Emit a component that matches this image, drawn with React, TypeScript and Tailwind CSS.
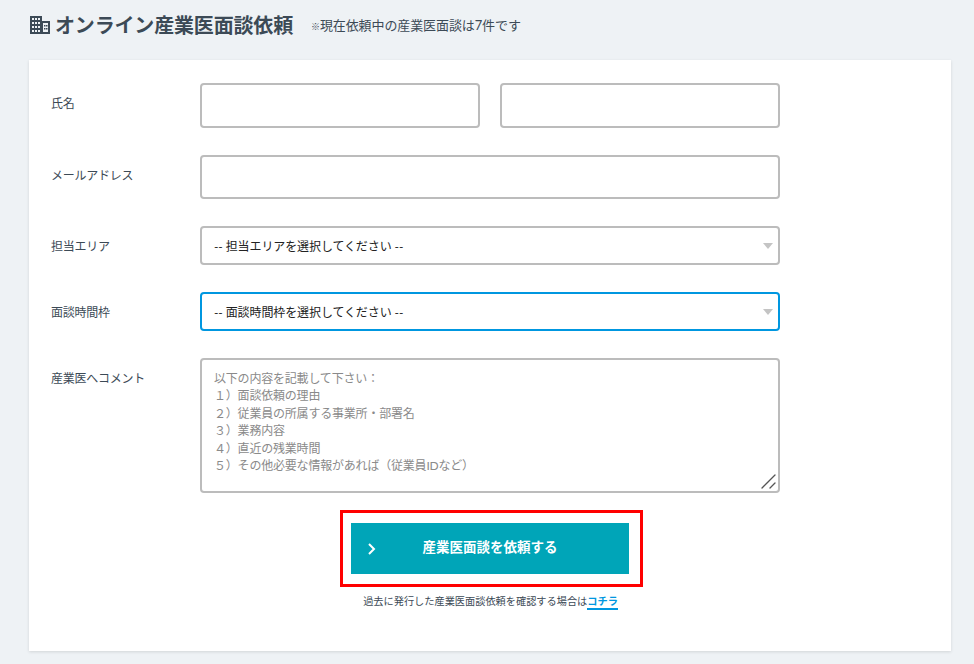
import React from "react";

const font = '"Lato", "Noto Sans CJK JP", sans-serif';

const BuildingIcon = () => (
  <svg width="20" height="18" viewBox="0 0 20 18" className="text-[#3c4a56]" fill="currentColor">
    <path
      fillRule="evenodd"
      d="M0 0h12v5h8v13H0V0zM2 2v2h2V2H2zm3 0v2h2V2H5zm3 0v2h2V2H8zM2 6v2h2V6H2zm3 0v2h2V6H5zm3 0v2h2V6H8zm-6 4v2h2v-2H2zm3 0v2h2v-2H5zm3 0v2h2v-2H8zm-6 4v2h2v-2H2zm3 0v2h2v-2H5zm3 0v2h2v-2H8zm5-7v9h5V7h-5z"
    />
    <rect x="14" y="9" width="1.5" height="1.5" />
    <rect x="16" y="9" width="1.5" height="1.5" />
    <rect x="14" y="12" width="1.5" height="1.5" />
    <rect x="16" y="12" width="1.5" height="1.5" />
  </svg>
);

const Row = ({ label, children, className }: { label: string; children: React.ReactNode; className: string }) => (
  <div className={`flex ${className}`}>
    <div className="w-[149px] shrink-0 pt-[12px] text-[12px] leading-[18px] tracking-[-0.25px] text-[#3c4a56]">{label}</div>
    <div className="w-[580px]">{children}</div>
  </div>
);

const SelectBox = ({ text, focused }: { text: string; focused?: boolean }) => (
  <div className="relative">
    <select
      className={`block h-[39px] w-full appearance-none rounded-[4px] border-2 bg-white pl-[12px] pr-8 pt-[2px] text-[12px] tracking-[-0.1px] text-[#222222] outline-none ${
        focused ? "border-[#0097e0]" : "border-[#bcbcbc]"
      }`}
      style={{ fontFamily: font }}
    >
      <option>{text}</option>
    </select>
    <span className="absolute right-[7px] top-[17px] h-0 w-0 border-x-[5.5px] border-t-[6px] border-x-transparent border-t-[#c4c4c4]" />
  </div>
);

const placeholder = `以下の内容を記載して下さい：
１）面談依頼の理由
２）従業員の所属する事業所・部署名
３）業務内容
４）直近の残業時間
５）その他必要な情報があれば（従業員IDなど）`;

export default function App() {
  return (
    <div className="min-h-[664px] bg-[#eef2f5] px-[29px]" style={{ fontFamily: font }}>
      <div className="flex h-[60px] items-center pb-[10px] pl-[1px]">
        <BuildingIcon />
        <h1 className="ml-[5px] text-[20px] font-bold leading-[28px] tracking-[-0.17px] text-[#3c4a56]">オンライン産業医面談依頼</h1>
        <p className="ml-[18px] pt-[2px] text-[13px] tracking-[-0.1px] text-[#3c4a56]">
          <span className="text-[9px]">※</span>現在依頼中の産業医面談は7件です
        </p>
      </div>

      <div className="h-[591px] w-[922px] bg-white pl-[22px] pt-[23px] shadow-[0_1px_3px_rgba(0,0,0,0.12)]">
        <Row label="氏名" className="mb-[27px]">
          <div className="flex gap-[20px]">
            <input className="h-[45px] w-[280px] rounded-[4px] border-2 border-[#bcbcbc] bg-white outline-none" />
            <input className="h-[45px] w-[280px] rounded-[4px] border-2 border-[#bcbcbc] bg-white outline-none" />
          </div>
        </Row>
        <Row label="メールアドレス" className="mb-[27px]">
          <input className="block h-[44px] w-full rounded-[4px] border-2 border-[#bcbcbc] bg-white outline-none" />
        </Row>
        <Row label="担当エリア" className="mb-[27px]">
          <SelectBox text="-- 担当エリアを選択してください --" />
        </Row>
        <Row label="面談時間枠" className="mb-[27px]">
          <SelectBox text="-- 面談時間枠を選択してください --" focused />
        </Row>
        <Row label="産業医へコメント" className="mb-[17px]">
          <div className="relative">
            <textarea
              className="block h-[135px] w-full resize-none rounded-[4px] border-2 border-[#bcbcbc] bg-white px-[12px] py-[10px] text-[12px] leading-[17.4px] tracking-[-0.2px] outline-none placeholder:text-[#8a8a8a]"
              style={{ fontFamily: font }}
              placeholder={placeholder}
            />
            <svg width="18" height="18" viewBox="0 0 18 18" stroke="#555555" strokeWidth="1.3" strokeLinecap="round" className="absolute bottom-[2px] right-[2px]">
              <path d="M2 15L15 2M10 15l5-5" />
            </svg>
          </div>
        </Row>

        <div className="ml-[289px] w-[303px] border-[3px] border-[#ff0000] py-[10px] pl-[8px]">
          <button className="relative block h-[51px] w-[278px] bg-[#00a5b8] pb-[2px] text-[13.5px] font-bold text-white">
            <svg
              width="10"
              height="14"
              viewBox="0 0 10 14"
              fill="none"
              stroke="currentColor"
              strokeWidth="2"
              className="absolute left-[16px] top-[19px]"
            >
              <path d="M2 2l5 5-5 5" />
            </svg>
            産業医面談を依頼する
          </button>
        </div>
        <p className="ml-[289px] mt-[6px] w-[301px] text-center text-[10.2px] leading-[16px] text-[#3c4a56]">
          過去に発行した産業医面談依頼を確認する場合は
          <a className="border-b-2 border-[#0097e0] pb-[1px] font-bold text-[#0097e0]">コチラ</a>
        </p>
      </div>
    </div>
  );
}
